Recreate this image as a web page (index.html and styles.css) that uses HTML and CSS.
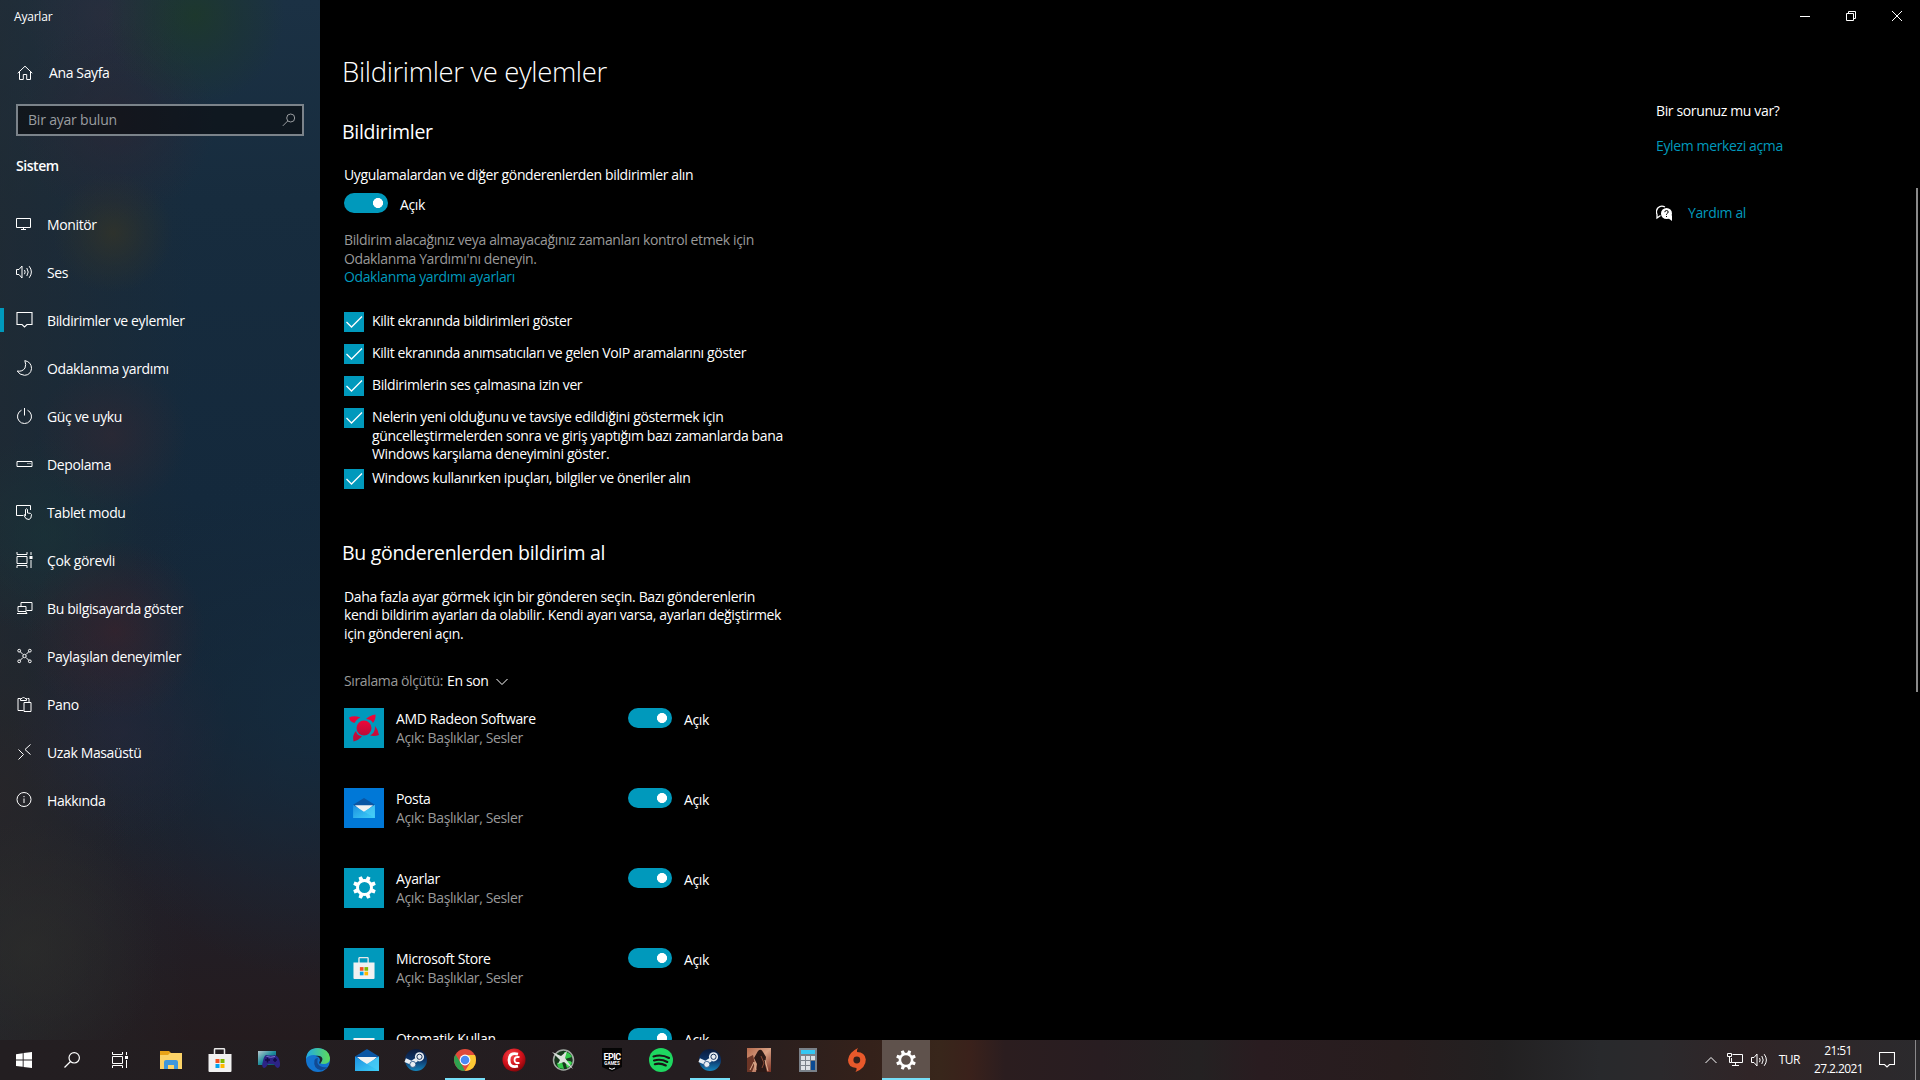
FILE: index.html
```
<!DOCTYPE html>
<html lang="tr">
<head>
    <meta charset="UTF-8">
    <meta name="viewport" content="width=device-width, initial-scale=1.0">
    <title>Ayarlar</title>
    <link rel="stylesheet" href="styles.css">
</head>
<body>
    <svg class="defs" width="0" height="0">
        <defs>
            <linearGradient id="amdRed" x1="0" y1="0" x2="0" y2="1">
                <stop offset="0" stop-color="#f0063a"/>
                <stop offset="1" stop-color="#b80d38"/>
            </linearGradient>
            <linearGradient id="mailBlue" x1="0" y1="0" x2="1" y2="1">
                <stop offset="0" stop-color="#1c8fe0"/>
                <stop offset="1" stop-color="#3ed0f8"/>
            </linearGradient>
            <linearGradient id="steamBlue" x1="0" y1="0" x2="0" y2="1">
                <stop offset="0" stop-color="#0b1a3a"/>
                <stop offset="0.5" stop-color="#0d3468"/>
                <stop offset="1" stop-color="#1586bd"/>
            </linearGradient>
            <linearGradient id="edgeTop" x1="0" y1="0" x2="1" y2="0">
                <stop offset="0" stop-color="#1fa9e6"/>
                <stop offset="1" stop-color="#5fdc57"/>
            </linearGradient>
            <radialGradient id="redBall" cx="0.4" cy="0.3" r="0.7">
                <stop offset="0" stop-color="#f5474b"/>
                <stop offset="0.6" stop-color="#d3121b"/>
                <stop offset="1" stop-color="#8b060b"/>
            </radialGradient>
            <linearGradient id="game" x1="0" y1="0" x2="1" y2="1">
                <stop offset="0" stop-color="#b56a4c"/>
                <stop offset="0.5" stop-color="#d9a184"/>
                <stop offset="1" stop-color="#7c3022"/>
            </linearGradient>
            <linearGradient id="screenTeal" x1="0" y1="0" x2="1" y2="1">
                <stop offset="0" stop-color="#b7c9cf"/>
                <stop offset="0.5" stop-color="#1c8c9b"/>
                <stop offset="1" stop-color="#0a4c66"/>
            </linearGradient>

            <symbol id="gear" viewBox="0 0 22 22">
                <circle cx="11" cy="11" r="6.7" fill="none" stroke="#fff" stroke-width="2.8"/>
                <g fill="#fff">
                    <path id="tooth" d="M8.9 4 9.4 0h3.2L13.1 4z" transform="rotate(22.5 11 11)"/>
                    <use href="#tooth" transform="rotate(45 11 11)"/>
                    <use href="#tooth" transform="rotate(90 11 11)"/>
                    <use href="#tooth" transform="rotate(135 11 11)"/>
                    <use href="#tooth" transform="rotate(180 11 11)"/>
                    <use href="#tooth" transform="rotate(225 11 11)"/>
                    <use href="#tooth" transform="rotate(270 11 11)"/>
                    <use href="#tooth" transform="rotate(315 11 11)"/>
                </g>
            </symbol>
            <symbol id="store" viewBox="0 0 24 24">
                <path d="M6.5 7V1.5Q6.5.7 7.3.7h8.4q.8 0 .8.8V7" fill="none" stroke="#e8e8e8" stroke-width="1.5"/>
                <path d="M.5 6h23v17q0 1-1 1h-21q-1 0-1-1z" fill="#f1f1f1"/>
                <path d="M7.5 11h4v4h-4z" fill="#f25022"/>
                <path d="M12.5 11h4v4h-4z" fill="#7fba00"/>
                <path d="M7.5 16h4v4h-4z" fill="#00a4ef"/>
                <path d="M12.5 16h4v4h-4z" fill="#ffb900"/>
            </symbol>
            <symbol id="mail" viewBox="0 0 24 22">
                <path d="M0 7.5 12 0l12 7.5v3H0z" fill="#0b56a4"/>
                <path d="M2 8h20l-10 9z" fill="#f2f2f2"/>
                <path d="M0 7.5 12 15l12-7.500V22H0z" fill="url(#mailBlue)"/>
                <path d="m12 15 12-7.500V22z" fill="#4ccdf6" opacity="0.6"/>
            </symbol>
            <symbol id="steam" viewBox="0 0 24 24">
                <circle cx="12" cy="12" r="11" fill="url(#steamBlue)"/>
                <path d="m1.200 12.200 6.600 2.800 4.800-3.300" fill="none" stroke="#e9eef3" stroke-width="4"/>
                <circle cx="15.500" cy="8.800" r="4.600" fill="#e9eef3"/>
                <circle cx="15.500" cy="8.800" r="2.600" fill="#e9eef3" stroke="#1b355c" stroke-width="1"/>
                <circle cx="8.800" cy="16.400" r="3" fill="#e9eef3" stroke="#1b4a7c" stroke-width="0.800"/>
            </symbol>
            <symbol id="taskview" viewBox="0 0 16 16">
                <path d="M.5 0v2.500h10V0M.5 4.500h10v7H.5zM.5 16v-2.500h10V16M14.500 0v3M14.500 8v8" fill="none" stroke="#fff"/>
                <path d="M13 4h3v3h-3z" fill="#fff"/>
            </symbol>
            <symbol id="speaker" viewBox="0 0 17 16">
                <path d="M.5 5.500H3l3-3.500v12l-3-3.500H.5zM8.500 6q1.300 2 0 4.200M10.800 4q2.800 4 0 8M13.200 2.200q4.400 5.800 0 11.600" fill="none" stroke="#fff"/>
            </symbol>
            <symbol id="note" viewBox="0 0 16 16">
                <path d="M.5.500h15v12h-5L8 15l-2.500-2.500h-5z" fill="none" stroke="#fff" stroke-width="1.100"/>
            </symbol>
        </defs>
    </svg>

    <div class="window">
        <aside class="sidebar">
            <div class="app-title">Ayarlar</div>
            <div class="home">
                <svg width="16" height="16" viewBox="0 0 16 16"><path d="M.7 8.200 8 1.200l7.300 7M2.500 7v7.500h3.800V9.500h3.400v5h3.800V7"/></svg>
                <span>Ana Sayfa</span>
            </div>
            <div class="search">
                <span>Bir ayar bulun</span>
                <svg width="14" height="14" viewBox="0 0 14 14"><circle cx="8.700" cy="5" r="4"/><path d="M5.800 7.900.8 12.900"/></svg>
            </div>
            <div class="section">Sistem</div>
            <nav>
                <div class="item">
                    <svg width="17" height="16" viewBox="0 0 17 16"><path d="M.5 2.500h14v9H.5zM7.500 11.500v2M5 13.500h5"/></svg>
                    <span>Monitör</span>
                </div>
                <div class="item">
                    <svg width="17" height="16"><use href="#speaker"/></svg>
                    <span>Ses</span>
                </div>
                <div class="item active">
                    <svg width="16" height="16"><use href="#note"/></svg>
                    <span>Bildirimler ve eylemler</span>
                </div>
                <div class="item">
                    <svg width="16" height="16" viewBox="0 0 16 16"><path d="M8.300.600Q15 2 15 8.600 14.300 15 8 15.300 3 15 .7 11 6 12 8.500 8 10 4.500 8.300.600z"/></svg>
                    <span>Odaklanma yardımı</span>
                </div>
                <div class="item">
                    <svg width="16" height="16" viewBox="0 0 16 16"><path d="M5 2.200a7 7 0 1 0 6 0M8 0v7.500"/></svg>
                    <span>Güç ve uyku</span>
                </div>
                <div class="item">
                    <svg width="16" height="16" viewBox="0 0 16 16"><path d="M.5 5.500h15v5H.5zM11 7.500h1M13 7.500h1"/></svg>
                    <span>Depolama</span>
                </div>
                <div class="item">
                    <svg width="17" height="16" viewBox="0 0 17 16"><path d="M7 11.500H.5v-10h14V6M9.500 11V5.500q1-1.500 2 0V9q4 0 4 1.500 0 4.500-2.500 5-3.500.500-5.200-4.500 1-1 2.200 1"/></svg>
                    <span>Tablet modu</span>
                </div>
                <div class="item">
                    <svg width="16" height="16"><use href="#taskview"/></svg>
                    <span>Çok görevli</span>
                </div>
                <div class="item">
                    <svg width="16" height="16" viewBox="0 0 16 16"><path d="M4.500 6V2.500h11v8H10M1.500 6.500h8v5h-8zM.5 13.500h10l-1.500-2"/></svg>
                    <span>Bu bilgisayarda göster</span>
                </div>
                <div class="item">
                    <svg width="16" height="16" viewBox="0 0 16 16"><path d="m3.500 3.500 3 3M12.500 3.500l-3 3M3.500 12.500l3-3M12.500 12.500l-3-3"/><circle cx="2.700" cy="2.700" r="1.400"/><circle cx="13.300" cy="2.700" r="1.400"/><circle cx="2.700" cy="13.300" r="1.400"/><circle cx="13.300" cy="13.300" r="1.400"/><circle cx="8" cy="8" r="1.700"/></svg>
                    <span>Paylaşılan deneyimler</span>
                </div>
                <div class="item">
                    <svg width="16" height="16" viewBox="0 0 16 16"><path d="M7 14.500H1.500v-12h2M11 2.500h1.500v4M4 4.500v-2h1.500Q7-.5 8.500 2.500H10v2zM7.500 6.500h7v9h-7z"/></svg>
                    <span>Pano</span>
                </div>
                <div class="item">
                    <svg width="16" height="16" viewBox="0 0 16 16"><path d="m2 5.500 5 5-5 5M14 .5l-5.500 5 5.500 5"/></svg>
                    <span>Uzak Masaüstü</span>
                </div>
                <div class="item">
                    <svg width="16" height="16" viewBox="0 0 16 16"><circle cx="7.500" cy="7.500" r="7"/><path d="M7.500 6.500V11M7.500 4v1.200"/></svg>
                    <span>Hakkında</span>
                </div>
            </nav>
        </aside>

        <main class="content">
            <h1>Bildirimler ve eylemler</h1>
            <h2>Bildirimler</h2>
            <p class="label">Uygulamalardan ve diğer gönderenlerden bildirimler alın</p>
            <div class="switch-row">
                <span class="toggle"></span><span>Açık</span>
            </div>
            <p class="hint">Bildirim alacağınız veya almayacağınız zamanları kontrol etmek için<br>Odaklanma Yardımı'nı deneyin.</p>
            <a class="link">Odaklanma yardımı ayarları</a>

            <div class="checks">
                <div class="check"><svg width="20" height="20" viewBox="0 0 20 20"><path d="m2.500 10 5 5L18 4.500"/></svg><span>Kilit ekranında bildirimleri göster</span></div>
                <div class="check"><svg width="20" height="20" viewBox="0 0 20 20"><path d="m2.500 10 5 5L18 4.500"/></svg><span>Kilit ekranında anımsatıcıları ve gelen VoIP aramalarını göster</span></div>
                <div class="check"><svg width="20" height="20" viewBox="0 0 20 20"><path d="m2.500 10 5 5L18 4.500"/></svg><span>Bildirimlerin ses çalmasına izin ver</span></div>
                <div class="check"><svg width="20" height="20" viewBox="0 0 20 20"><path d="m2.500 10 5 5L18 4.500"/></svg><span>Nelerin yeni olduğunu ve tavsiye edildiğini göstermek için<br>güncelleştirmelerden sonra ve giriş yaptığım bazı zamanlarda bana<br>Windows karşılama deneyimini göster.</span></div>
                <div class="check"><svg width="20" height="20" viewBox="0 0 20 20"><path d="m2.500 10 5 5L18 4.500"/></svg><span>Windows kullanırken ipuçları, bilgiler ve öneriler alın</span></div>
            </div>

            <h2>Bu gönderenlerden bildirim al</h2>
            <p class="desc">Daha fazla ayar görmek için bir gönderen seçin. Bazı gönderenlerin<br>kendi bildirim ayarları da olabilir. Kendi ayarı varsa, ayarları değiştirmek<br>için göndereni açın.</p>
            <div class="sort">
                <span class="muted">Sıralama ölçütü:</span><span>En son</span>
                <svg width="12" height="8" viewBox="0 0 12 8"><path d="m.5 1 5.500 5.500L11.500 1"/></svg>
            </div>

            <div class="sender">
                <div class="tile">
                    <svg width="30" height="28" viewBox="0 0 30 28">
                        <g fill="url(#amdRed)">
                            <circle cx="15" cy="14" r="7.500"/>
                            <path d="M0 3.500Q5 1 11.500 3.500 8 4.500 5.500 9 1 8 0 3.500zM17 5Q21 1 26.500.500 27 5 24 9 22.500 5.500 17 5zM26 12Q29.500 16 30 21q-4 1.500-9 .5 5.500-3 5-9.500zM7 17q.5 4 6 5.500Q10 26 4.500 27.500 3 21 7 17z"/>
                        </g>
                    </svg>
                </div>
                <div class="sender-text"><div>AMD Radeon Software</div><div class="muted">Açık: Başlıklar, Sesler</div></div>
                <div class="switch-row"><span class="toggle"></span><span>Açık</span></div>
            </div>
            <div class="sender">
                <div class="tile blue"><svg width="22" height="20"><use href="#mail"/></svg></div>
                <div class="sender-text"><div>Posta</div><div class="muted">Açık: Başlıklar, Sesler</div></div>
                <div class="switch-row"><span class="toggle"></span><span>Açık</span></div>
            </div>
            <div class="sender">
                <div class="tile"><svg width="23" height="23"><use href="#gear"/></svg></div>
                <div class="sender-text"><div>Ayarlar</div><div class="muted">Açık: Başlıklar, Sesler</div></div>
                <div class="switch-row"><span class="toggle"></span><span>Açık</span></div>
            </div>
            <div class="sender">
                <div class="tile"><svg width="22" height="22"><use href="#store"/></svg></div>
                <div class="sender-text"><div>Microsoft Store</div><div class="muted">Açık: Başlıklar, Sesler</div></div>
                <div class="switch-row"><span class="toggle"></span><span>Açık</span></div>
            </div>
            <div class="sender">
                <div class="tile"><svg width="22" height="20" viewBox="0 0 22 20"><path d="M.5 0h21v17H.5z" fill="#f1f1f1"/></svg></div>
                <div class="sender-text"><div>Otomatik Kullan</div><div class="muted">Açık: Başlıklar, Sesler</div></div>
                <div class="switch-row"><span class="toggle"></span><span>Açık</span></div>
            </div>
        </main>

        <aside class="help">
            <div class="controls">
                <svg width="10" height="10" viewBox="0 0 10 10"><path d="M0 5.500h10"/></svg>
                <svg width="10" height="10" viewBox="0 0 10 10"><path d="M.5 2.500h7v7h-7zM2.500 2.500v-2h7v7h-2"/></svg>
                <svg width="10" height="10" viewBox="0 0 10 10"><path d="m0 0 10 10M10 0 0 10"/></svg>
            </div>
            <p>Bir sorunuz mu var?</p>
            <a class="link">Eylem merkezi açma</a>
            <div class="get-help">
                <svg width="17" height="16" viewBox="0 0 17 16">
                    <path d="M4.500 10.500 1 13V9.500Q-.5 6 1.800 3 5-.3 9 2" fill="none" stroke="#fff" stroke-width="1.300"/>
                    <circle cx="10.500" cy="8.500" r="5.500" fill="#fff"/>
                    <path d="m12 13 4 3v-6z" fill="#fff"/>
                    <path d="M8.800 7.200q0-1.700 1.700-1.700t1.700 1.500q0 1-1.700 2v.8M10.500 11v1" fill="none" stroke="#000"/>
                </svg>
                <a class="link">Yardım al</a>
            </div>
        </aside>
        <div class="scrollbar"></div>
    </div>

    <footer class="taskbar">
        <div class="task"><svg width="16" height="16" viewBox="0 0 16 16"><path d="M0 2.200 6.700 1.300v6.300H0zM7.600 1.100 16 0v7.600H7.600zM0 8.500h6.700v6.300L0 13.900zM7.600 8.500H16V16l-8.400-1.100z" fill="#fff"/></svg></div>
        <div class="task"><svg width="16" height="16" viewBox="0 0 16 16"><circle cx="10.200" cy="5.800" r="5.200" fill="none" stroke="#fff" stroke-width="1.200"/><path d="M6.500 9.500.5 15.500" stroke="#fff" stroke-width="1.300"/></svg></div>
        <div class="task"><svg width="16" height="16"><use href="#taskview"/></svg></div>
        <div class="apps">
            <div class="task">
                <svg width="24" height="24" viewBox="0 0 24 24"><path d="M1 3h9l2 2h10q1 0 1 1v14H1z" fill="#e8a317"/><path d="M1 7h8l2-2h12v16H1z" fill="#fbd368"/><path d="M5 21v-7q0-2 2-2h10q2 0 2 2v7h-4v-4H9v4z" fill="#3e97dc"/></svg>
            </div>
            <div class="task"><svg width="24" height="24"><use href="#store"/></svg></div>
            <div class="task">
                <svg width="24" height="24" viewBox="0 0 24 24"><path d="M1 3h18v14H1z" fill="url(#screenTeal)"/><path d="M9 7q5 1 9 0 4 1 5 8 .5 4-2 5-2 0-4-4h-6q-2 4-4 4-3-1-1-7 1-5 3-6z" fill="#2c2385"/><path d="M9.500 8.500q4 1.500 8.500 0" stroke="#7a78cf" fill="none"/><path d="M8 12h5M10.500 9.500v5M18 10v4M16 12h4" stroke="#120b45" stroke-width="1.500"/></svg>
            </div>
            <div class="task">
                <svg width="24" height="24" viewBox="0 0 24 24"><circle cx="12" cy="12" r="12" fill="#1374cf"/><path d="M0 11Q1 0 12 0q11 1 12 10 0 6-7 6-4 0-3-3 1-6-6-6-6 0-8 4z" fill="url(#edgeTop)"/><path d="M8.500 12Q7 20 14 22q4 1 7.500-3-4 1-7.500-1-4-3-2-8-2.500 0-3.500 2z" fill="#124a92"/><path d="M14 16q-1.500-1 0-3.500 0-4-4.500-4.500 6-1 7 3 0 2-2.500 5z" fill="#1c2430"/></svg>
            </div>
            <div class="task"><svg width="24" height="22"><use href="#mail"/></svg></div>
            <div class="task"><svg width="24" height="24"><use href="#steam"/></svg></div>
            <div class="task open">
                <svg width="24" height="24" viewBox="0 0 24 24"><circle cx="12" cy="12" r="11" fill="#e04a3a"/><path d="M2.500 6.500 9 17l3 6Q3 23 1 13q-.5-4 1.500-6.500z" fill="#2fa24f"/><path d="M12 23q11-1 11-11 0-3-1-5H12l5 8z" fill="#fcc934"/><circle cx="12" cy="12" r="5.400" fill="#fff"/><circle cx="12" cy="12" r="4.300" fill="#4a8af4"/></svg>
            </div>
            <div class="task">
                <svg width="24" height="24" viewBox="0 0 24 24"><circle cx="12" cy="12" r="11.500" fill="url(#redBall)"/><path d="M16 6.200Q7 4 7 12t9 6.200" fill="none" stroke="#fff" stroke-width="2.800"/><path d="M17.500 9.200q-5-1-5 2.800t5 2.800" fill="none" stroke="#fff" stroke-width="1.800"/></svg>
            </div>
            <div class="task">
                <svg width="24" height="24" viewBox="0 0 24 24"><circle cx="12.500" cy="12" r="10" fill="#17381d" stroke="#a3aba5" stroke-width="1.500"/><path d="M13 4q6 0 8 5l-7 2zM8 20q-2-2-2-5l5-1 2 7z" fill="#34c84a"/><path d="M14 13q6-1 7 2-2 4-5 5z" fill="#41dd53"/><path d="m1 4 9 4 6-5-2 7 8 11-9-7-6 2 2-4z" fill="#dce2dd"/></svg>
            </div>
            <div class="task">
                <svg width="22" height="24" viewBox="0 0 22 24"><path d="M1 0h20v19l-10 4.500L1 19z" fill="#050505"/><text x="11" y="11.500" class="epic">EPIC</text><text x="11" y="17" class="epic-sub">GAMES</text><path d="m8 20 3 1.300L14 20" stroke="#fff" fill="none"/></svg>
            </div>
            <div class="task">
                <svg width="24" height="24" viewBox="0 0 24 24"><circle cx="12" cy="12" r="12" fill="#1ed760"/><path d="M4.500 8.500q8-2.500 15.500 1.500M5 12.500q7-2 13.300 1.500M5.800 16.200q5.700-1.500 11 1.300" fill="none" stroke="#191414" stroke-width="2.100" stroke-linecap="round"/></svg>
            </div>
            <div class="task open"><svg width="24" height="24"><use href="#steam"/></svg></div>
            <div class="task">
                <svg width="24" height="24" viewBox="0 0 24 24"><path d="M0 0h24v24H0z" fill="url(#game)"/><path d="M11 3q3-3 5 1l3 5-1 7 2 8H9l1-8-3-6z" fill="#2b1916"/><path d="M0 10 6 7l2 9-3 8H0z" fill="#6c3526"/><path d="m3 22 4-8 2 8M18 12l3 11" stroke="#e0b090" fill="none"/><path d="m14 8 3 7-2 5" stroke="#8d4a35" fill="none"/></svg>
            </div>
            <div class="task">
                <svg width="18" height="24" viewBox="0 0 18 24"><path d="M0 0h18v24H0z" fill="#7a8189"/><path d="M2 2h14v4H2z" fill="#35c7f2"/><path d="M2 8h4v4H2zM7 8h4v4H7zM12 8h4v4h-4zM2 13h4v4H2zM7 13h4v4H7zM2 18h4v4H2zM7 18h4v4H7z" fill="#dde1e5"/><path d="M12 13h4v9h-4z" fill="#0a4a92"/></svg>
            </div>
            <div class="task">
                <svg width="20" height="24" viewBox="0 0 20 24"><path d="M11 0q-1.500 2-1 4 8 0 8.800 7.500Q19 20 8.500 24q1.500-2 1-4Q1 19.500 1 12 1.500 4.500 11 0z" fill="#e8592b"/><circle cx="9.800" cy="12" r="3.400" fill="#33201b"/></svg>
            </div>
            <div class="task current"><svg width="20" height="20"><use href="#gear"/></svg></div>
        </div>
        <div class="tray">
            <svg width="12" height="8" viewBox="0 0 12 8"><path d="M.5 7 6 1.500 11.500 7"/></svg>
            <svg width="17" height="16" viewBox="0 0 17 16"><path d="M5.500 2.500h10v8h-11V6M8.500 10.500v3M5 13.500h7M.5 1.500h4v3h-4zM2.500 4.500v6h2"/></svg>
            <svg width="17" height="16"><use href="#speaker"/></svg>
            <span class="lang">TUR</span>
            <div class="clock"><div>21:51</div><div>27.2.2021</div></div>
            <svg class="action" width="16" height="16"><use href="#note"/></svg>
            <div class="peek"></div>
        </div>
    </footer>
</body>
</html>
```
FILE: styles.css
```
* {
    box-sizing: border-box;
}
body {
    margin: 0;
    width: 1920px;
    height: 1080px;
    overflow: hidden;
    background-color: #000;
    color: #fff;
    font-family: "Open Sans", "Noto Sans", sans-serif;
    font-size: 14px;
    line-height: 18.5px;
    letter-spacing: -0.37px;
}
h1, h2, p {
    margin: 0;
    font-weight: normal;
}
svg {
    display: block;
    flex: none;
}
.defs {
    position: absolute;
}
.window {
    display: flex;
    height: 1040px;
    overflow: hidden;
}

/* left navigation */
.sidebar {
    width: 320px;
    flex: none;
    background:
        radial-gradient(circle 90px at 195px 15px, rgba(30, 58, 38, 0.75), rgba(30, 58, 38, 0.35) 50%, transparent),
        radial-gradient(circle 100px at 115px 120px, rgba(46, 38, 52, 0.6), transparent),
        radial-gradient(circle 80px at 105px 15px, rgba(50, 44, 60, 0.5), transparent),
        radial-gradient(circle 60px at 113px 233px, rgba(52, 52, 40, 0.75), rgba(48, 50, 42, 0.35) 55%, transparent),
        radial-gradient(circle 75px at 112px 435px, rgba(52, 40, 50, 0.6), transparent),
        radial-gradient(circle 90px at 115px 630px, rgba(58, 34, 43, 0.7), transparent),
        radial-gradient(circle 100px at 45px 535px, rgba(25, 52, 56, 0.6), transparent),
        radial-gradient(circle 110px at 120px 730px, rgba(40, 39, 58, 0.6), transparent),
        radial-gradient(circle 130px at 30px 950px, rgba(44, 45, 43, 0.7), transparent),
        radial-gradient(ellipse 240px 260px at 320px 720px, rgba(20, 44, 64, 0.8), transparent),
        radial-gradient(ellipse 130px 260px at 0 800px, rgba(40, 37, 40, 0.8), transparent),
        linear-gradient(90deg, rgba(36, 42, 47, 0.6), transparent 60%),
        linear-gradient(#1b3144 0, #172c3e 200px, #14293c 500px, #162433 720px, #211f28 880px, #241b1e 1040px);
}
.sidebar svg {
    fill: none;
    stroke: #fff;
}
.sidebar svg use {
    stroke: none;
}
.app-title {
    padding: 8px 0 0 14px;
    height: 57px;
    font-size: 12px;
    line-height: 18px;
    letter-spacing: -0.2px;
}
.home {
    display: flex;
    align-items: center;
    gap: 16px;
    height: 32px;
    padding-left: 17px;
}
.search {
    display: flex;
    align-items: center;
    justify-content: space-between;
    width: 288px;
    height: 32px;
    margin: 15px 0 0 16px;
    padding: 0 6px 0 10px;
    border: 2px solid #7b838a;
    background-color: rgba(10, 12, 16, 0.65);
    color: #9a9da0;
    letter-spacing: -0.2px;
}
.search svg {
    stroke: #9a9da0;
}
.section {
    height: 64px;
    padding: 21px 0 0 16px;
    font-weight: 600;
    letter-spacing: -0.45px;
}
.item {
    display: flex;
    align-items: center;
    height: 48px;
    padding-left: 16px;
}
.item svg {
    width: 17px;
    margin-right: 14px;
}
.item span {
    padding-top: 3px;
}
.active {
    background: linear-gradient(#0099bc, #0099bc) no-repeat 0 12px / 4px 24px;
}

/* settings page */
.content {
    flex: 1;
    padding: 52px 0 0 24px;
}
h1 {
    height: 64px;
    margin-left: -2px;
    font-size: 27.5px;
    font-weight: 300;
    line-height: 40px;
    letter-spacing: -0.35px;
}
h2 {
    height: 50px;
    margin-left: -2px;
    font-size: 19.5px;
    line-height: 32px;
    letter-spacing: -0.3px;
}
.label {
    height: 27px;
}
.switch-row {
    display: flex;
    gap: 12px;
    height: 20px;
    line-height: 23px;
}
.toggle {
    width: 44px;
    height: 20px;
    border-radius: 10px;
    background: radial-gradient(circle at 34px 10px, #fff 4.7px, #0099bc 5.3px);
}
.hint {
    padding-top: 18px;
    color: #999;
}
.link {
    display: block;
    color: #0099bc;
}
.muted {
    color: #999;
}
.checks {
    padding-top: 25.5px;
    height: 250px;
}
.check {
    display: flex;
    gap: 8px;
    min-height: 20px;
    margin-bottom: 12px;
}
.check:nth-child(4) {
    margin-bottom: 5.5px;
}
.check svg {
    background-color: #0099bc;
    fill: none;
    stroke: #fff;
    stroke-width: 1.3;
}
.desc {
    height: 85px;
    padding-top: 1px;
}
.sort {
    display: flex;
    gap: 4px;
    height: 36px;
}
.sort svg {
    margin: 6px 0 0 4px;
    fill: none;
    stroke: #fff;
}
.sender {
    display: flex;
    height: 80px;
}
.tile {
    display: flex;
    align-items: center;
    justify-content: center;
    width: 40px;
    height: 40px;
    background-color: #0099bc;
}
.blue {
    background-color: #0078d7;
}
.sender-text {
    width: 244px;
    padding: 1px 0 0 12px;
    line-height: 19px;
}

/* help column */
.help {
    width: 264px;
    margin-right: -4px;
    flex: none;
}
.controls {
    display: flex;
    gap: 36px;
    padding: 11px 0 0 144px;
    height: 102px;
}
.controls svg {
    fill: none;
    stroke: #fff;
}
.help p {
    height: 35px;
}
.get-help {
    display: flex;
    align-items: center;
    gap: 15px;
    margin-top: 48px;
}
.scrollbar {
    width: 2px;
    height: 504px;
    margin: 188px 2px 0 0;
    flex: none;
    background-color: #8a8a8a;
}

/* taskbar */
.taskbar {
    display: flex;
    height: 40px;
    background: linear-gradient(90deg, #231e21 0, #241d20 700px, #34211a 870px, #38261b 940px, #3a211b 970px, #2b1d1f 1005px, #281d21 1100px, #242122 1200px, #291c20 1260px, #271d1e 1400px, #222021 1500px, #28292c 1600px, #2b292c 1660px, #302527 1750px, #2b2a2d 1920px);
}
.task {
    display: flex;
    align-items: center;
    justify-content: center;
    width: 48px;
    height: 40px;
}
.apps {
    display: flex;
    gap: 1px;
    margin-left: 3px;
}
.open {
    background: linear-gradient(#76dff8, #76dff8) no-repeat 4px 38px / 40px 2px;
}
.current {
    background: linear-gradient(#76dff8, #76dff8) no-repeat 0 38px / 48px 2px #5f524c;
}
.epic {
    fill: #fff;
    font: bold 9px "Roboto", sans-serif;
    letter-spacing: -0.6px;
    text-anchor: middle;
}
.epic-sub {
    fill: #fff;
    font: bold 4.5px "Roboto", sans-serif;
    letter-spacing: 0;
    text-anchor: middle;
}
.tray {
    display: flex;
    align-items: center;
    margin-left: auto;
    font-size: 12px;
}
.tray svg {
    margin-right: 7px;
    fill: none;
    stroke: #fff;
}
.tray svg:first-child {
    margin-right: 10px;
}
.tray svg use {
    stroke: none;
}
.lang {
    margin: 0 14px 0 4px;
    letter-spacing: -0.5px;
}
.clock {
    width: 48px;
    text-align: center;
    line-height: 18px;
    letter-spacing: -0.6px;
}
.tray .action {
    margin: 0 20px 0 17px;
}
.peek {
    width: 5px;
    height: 40px;
    border-left: 1px solid #8a898b;
}
```
